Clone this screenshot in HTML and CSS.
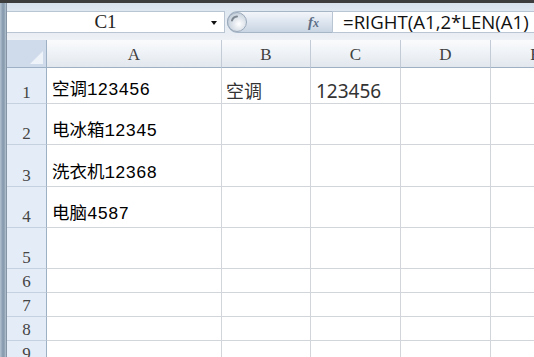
FILE: index.html
```html
<!DOCTYPE html>
<html lang="zh-CN">
<head>
<meta charset="utf-8">
<title>Excel</title>
<link rel="stylesheet" href="styles.css">
</head>
<body>
<div class="topbar"></div>
<div class="window">
  <div class="frame"></div>
  <div class="main">
    <div class="fbar">
      <div class="namebox"><span class="ref">C1</span><span class="arrow"></span></div>
      <div class="pill">
        <svg class="knob" width="20" height="22" viewBox="0 0 20 22">
          <defs>
            <radialGradient id="kg" cx="0.6" cy="0.6" r="0.6">
              <stop offset="0" stop-color="#ffffff"/>
              <stop offset="1" stop-color="#c4cfdb"/>
            </radialGradient>
          </defs>
          <circle cx="10" cy="11" r="9.5" fill="url(#kg)" stroke="#9aa9ba" stroke-width="1"/>
          <path d="M5 9.5 A5.5 5.5 0 0 1 10 5.5" fill="none" stroke="#7d8792" stroke-width="2" stroke-linecap="round"/>
        </svg>
        <span class="fx"><i>f</i><i class="x">x</i></span>
      </div>
      <div class="input">=RIGHT(A1,2*LEN(A1)</div>
    </div>
    <div class="sheet">
      <div class="corner"><span class="tri"></span></div>
      <div class="ch">A</div>
      <div class="ch">B</div>
      <div class="ch">C</div>
      <div class="ch">D</div>
      <div class="ch">E</div>

      <div class="rh">1</div>
      <div class="c ca">空调123456</div>
      <div class="c cb">空调</div>
      <div class="c cc">123456</div>
      <div class="c"></div>
      <div class="c"></div>

      <div class="rh">2</div>
      <div class="c ca">电冰箱12345</div>
      <div class="c"></div>
      <div class="c"></div>
      <div class="c"></div>
      <div class="c"></div>

      <div class="rh">3</div>
      <div class="c ca">洗衣机12368</div>
      <div class="c"></div>
      <div class="c"></div>
      <div class="c"></div>
      <div class="c"></div>

      <div class="rh">4</div>
      <div class="c ca">电脑4587</div>
      <div class="c"></div>
      <div class="c"></div>
      <div class="c"></div>
      <div class="c"></div>

      <div class="rh">5</div>
      <div class="c"></div>
      <div class="c"></div>
      <div class="c"></div>
      <div class="c"></div>
      <div class="c"></div>

      <div class="rh">6</div>
      <div class="c"></div>
      <div class="c"></div>
      <div class="c"></div>
      <div class="c"></div>
      <div class="c"></div>

      <div class="rh">7</div>
      <div class="c"></div>
      <div class="c"></div>
      <div class="c"></div>
      <div class="c"></div>
      <div class="c"></div>

      <div class="rh">8</div>
      <div class="c"></div>
      <div class="c"></div>
      <div class="c"></div>
      <div class="c"></div>
      <div class="c"></div>

      <div class="rh">9</div>
      <div class="c"></div>
      <div class="c"></div>
      <div class="c"></div>
      <div class="c"></div>
      <div class="c"></div>
    </div>
  </div>
</div>
</body>
</html>
```
FILE: styles.css
```css
* { box-sizing: border-box; }
html, body {
  margin: 0;
  padding: 0;
  width: 534px;
  height: 357px;
  overflow: hidden;
  background: #ffffff;
}
.topbar {
  height: 3px;
  background: #3d3d3d;
}
.window {
  display: flex;
  height: 354px;
}
.frame {
  width: 7px;
  flex: none;
  background: linear-gradient(to right, #b3c2d1 0px, #8498ac 3px, #98aabb 5px, #bccad7 6px);
  border-right: 1px solid #8595a6;
}
.main {
  flex: 1;
  display: flex;
  flex-direction: column;
  min-width: 0;
  overflow: hidden;
}
.fbar {
  height: 37px;
  flex: none;
  display: flex;
  align-items: flex-start;
  padding-top: 8px;
  background: linear-gradient(to bottom, #d7e1ec 0px, #dfe7f0 8px, #e9eef4 30px, #eef1f5 37px);
}
.namebox {
  width: 218px;
  height: 22px;
  background: #ffffff;
  border: 1px solid #b9c5d2;
  border-left: none;
  display: flex;
  align-items: center;
  padding-right: 20px;
  position: relative;
}
.ref {
  flex: 1;
  text-align: center;
  font-family: "Liberation Serif", serif;
  font-size: 19px;
  line-height: 20px;
  color: #222;
}
.arrow {
  position: absolute;
  right: 7px;
  top: 9px;
  width: 0;
  height: 0;
  border-left: 3.5px solid transparent;
  border-right: 3.5px solid transparent;
  border-top: 4px solid #111;
}
.pill {
  width: 105px;
  height: 22px;
  margin-left: 2px;
  border: 1px solid #a7b6c7;
  border-right: none;
  border-radius: 11px 0 0 11px;
  background: linear-gradient(to bottom, #f3f6fa 0%, #dde5ef 50%, #c9d5e3 100%);
  display: flex;
  align-items: center;
  justify-content: space-between;
  padding-right: 13px;
}
.knob {
  margin-left: -1px;
  margin-top: -1px;
}
.fx {
  font-family: "Liberation Serif", serif;
  font-size: 15px;
  color: #5d6e86;
  font-weight: bold;
}
.fx .x {
  font-size: 12px;
}
.input {
  flex: 1;
  min-width: 0;
  height: 22px;
  background: #ffffff;
  border: 1px solid #b9c5d2;
  border-right: none;
  padding-left: 10px;
  font-family: "Open Sans", sans-serif;
  font-size: 18.6px;
  line-height: 20px;
  color: #111;
  white-space: nowrap;
}
.sheet {
  display: grid;
  grid-template-columns: 40px 175px 89px 90px 90px 90px;
  grid-template-rows: 28px 36px 41px 42px 41px 41px 24px 24px 24px 24px;
}
.corner {
  background: #cfdbea;
  border-right: 1px solid #9eb0c4;
  border-bottom: 1px solid #9eb0c4;
  position: relative;
}
.tri {
  position: absolute;
  right: 3px;
  bottom: 3px;
  width: 0;
  height: 0;
  border-left: 13px solid transparent;
  border-bottom: 13px solid #eef3f9;
}
.ch {
  background: linear-gradient(to bottom, #fafbfd 0%, #eef2f6 50%, #e2e7ee 100%);
  border-right: 1px solid #c3ccd6;
  border-bottom: 1px solid #9eb0c4;
  display: flex;
  align-items: center;
  justify-content: center;
  font-family: "Liberation Serif", serif;
  font-size: 17px;
  color: #3f3f3f;
  padding-top: 2px;
}
.rh {
  background: #e4ecf7;
  border-right: 1px solid #9eb0c4;
  border-bottom: 1px solid #c5d1de;
  display: flex;
  align-items: flex-end;
  justify-content: center;
  font-family: "Liberation Serif", serif;
  font-size: 17px;
  line-height: 1;
  color: #444;
  padding-bottom: 2px;
}
.c {
  border-right: 1px solid #d2d5d9;
  border-bottom: 1px solid #d2d5d9;
  display: flex;
  align-items: flex-end;
  white-space: nowrap;
  line-height: 1;
}
.ca {
  font-family: "Liberation Mono", "Noto Sans CJK SC", monospace;
  font-size: 17.5px;
  color: #000;
  padding: 0 0 4px 5px;
}
.cb {
  font-family: "Noto Sans CJK SC", sans-serif;
  font-size: 18px;
  color: #333;
  padding: 0 0 4px 4px;
}
.cc {
  font-family: "Noto Sans", sans-serif;
  font-size: 19px;
  color: #333;
  padding: 0 0 2px 5px;
}
```
